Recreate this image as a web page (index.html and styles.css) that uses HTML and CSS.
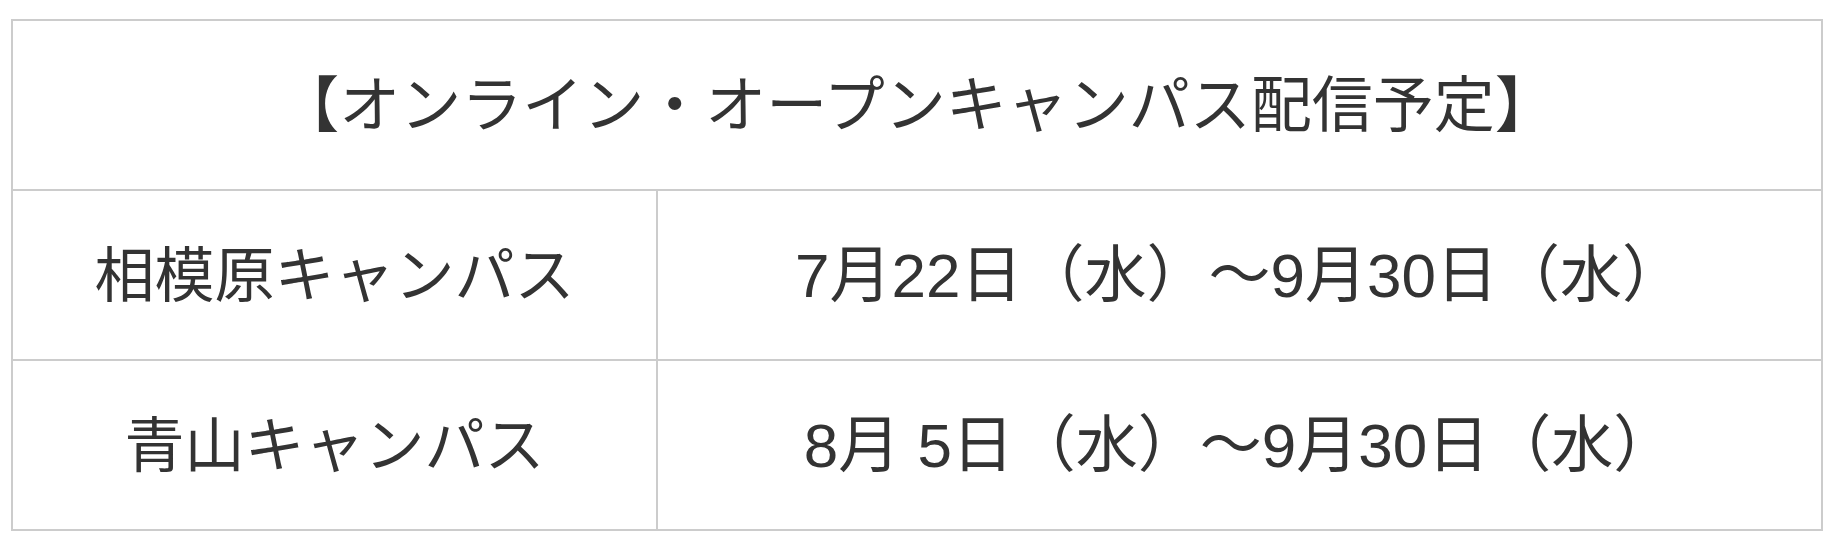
FILE: index.html
```html
<!DOCTYPE html>
<html lang="ja">
<head>
<meta charset="utf-8">
<link rel="stylesheet" href="styles.css">
</head>
<body>
<div class="wrap">
<table class="schedule">
  <colgroup>
    <col class="col-campus">
    <col class="col-date">
  </colgroup>
  <tr>
    <th colspan="2" class="title">【オンライン・オープンキャンパス配信予定】</th>
  </tr>
  <tr>
    <td class="campus">相模原キャンパス</td>
    <td class="date">7月22日（水）〜9月30日（水）</td>
  </tr>
  <tr>
    <td class="campus">青山キャンパス</td>
    <td class="date">8月 5日（水）〜9月30日（水）</td>
  </tr>
</table>
</div>
</body>
</html>
```
FILE: styles.css
```css
html, body {
  margin: 0;
  padding: 0;
  background: #fff;
}
.wrap {
  padding: 19px 0 0 11px;
}
.schedule {
  width: 1812px;
  border-collapse: collapse;
  table-layout: fixed;
  font-family: "Liberation Sans", "Noto Sans CJK JP", sans-serif;
  color: #333;
}
.col-campus {
  width: 645px;
}
.schedule th,
.schedule td {
  border: 2px solid #cccccc;
  text-align: center;
  vertical-align: middle;
  height: 158px;
  padding: 0 0 10px 0;
  font-weight: normal;
}
.schedule .title {
  font-size: 61px;
}
.schedule .campus {
  font-size: 60px;
}
.schedule .date {
  font-size: 62px;
}
```
